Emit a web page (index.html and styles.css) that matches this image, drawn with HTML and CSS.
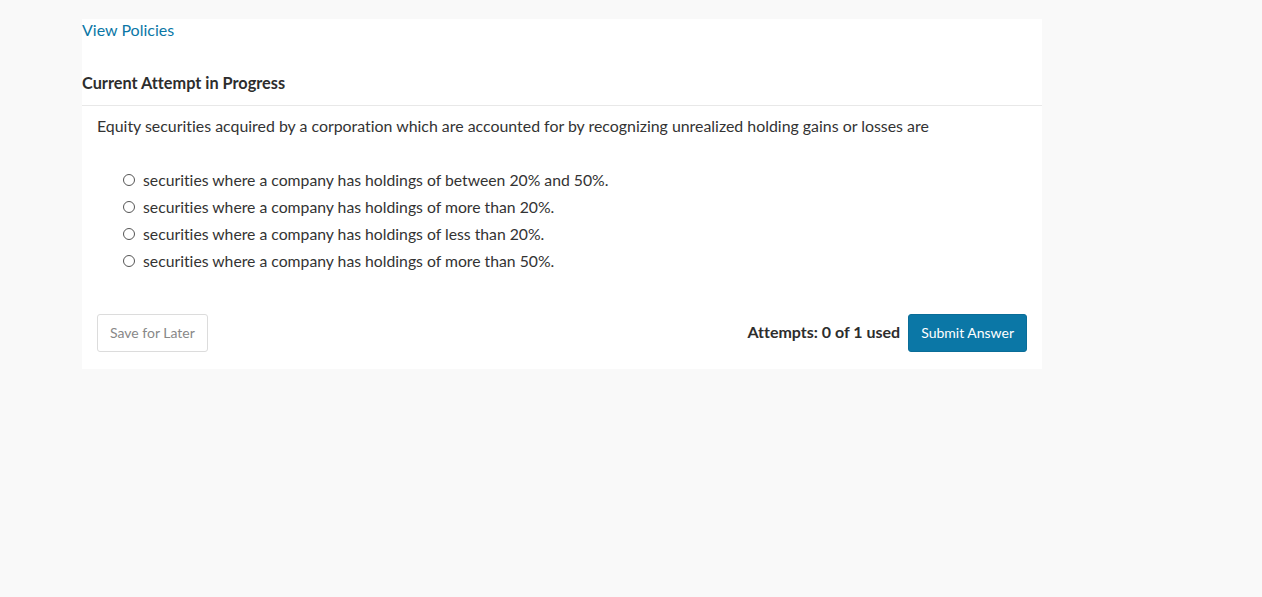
FILE: index.html
```html
<!DOCTYPE html>
<html lang="en">
<head>
    <meta charset="UTF-8">
    <meta name="viewport" content="width=device-width, initial-scale=1.0">
    <title>Current Attempt</title>
    <link rel="stylesheet" href="styles.css">
</head>
<body>
    <div class="panel">
        <a href="#" class="policies">View Policies</a>
        <h2 class="attempt-title">Current Attempt in Progress</h2>
        <div class="question">
            <p class="question-text">Equity securities acquired by a corporation which are accounted for by recognizing unrealized holding gains or losses are</p>
            <ul class="options">
                <li><label><input type="radio" name="answer"> securities where a company has holdings of between 20% and 50%.</label></li>
                <li><label><input type="radio" name="answer"> securities where a company has holdings of more than 20%.</label></li>
                <li><label><input type="radio" name="answer"> securities where a company has holdings of less than 20%.</label></li>
                <li><label><input type="radio" name="answer"> securities where a company has holdings of more than 50%.</label></li>
            </ul>
        </div>
        <div class="footer">
            <button type="button" class="btn-save">Save for Later</button>
            <div class="submit-group">
                <span class="attempts">Attempts: 0 of 1 used</span>
                <button type="button" class="btn-submit">Submit Answer</button>
            </div>
        </div>
    </div>
</body>
</html>
```

FILE: styles.css
```css
* {
    box-sizing: border-box;
}
body {
    margin: 0;
    background-color: #f9f9f9;
    font-family: Lato, 'Open Sans', sans-serif;
    font-size: 16px;
    font-variant-ligatures: no-common-ligatures;
    color: #333;
}
.panel {
    width: 960px;
    margin: 19px 0 0 82px;
    background-color: #ffffff;
    padding-bottom: 17px;
}
.policies {
    display: block;
    line-height: 22px;
    color: #0b77a6;
    text-decoration: none;
}
.attempt-title {
    margin: 31px 0 0;
    font-size: 16.3px;
    line-height: 22px;
    font-weight: bold;
    color: #2d2d2d;
    padding-bottom: 11px;
    border-bottom: 1px solid #e8e8e8;
}
.question {
    padding: 9px 15px 0;
}
.question-text {
    margin: 0;
    line-height: 22px;
    font-size: 15.9px;
}
.options {
    list-style: none;
    margin: 29px 0 0;
    padding: 0 0 0 26px;
    font-size: 15.75px;
}
.options li {
    line-height: 27px;
}
.options label {
    display: flex;
    align-items: center;
    gap: 8px;
}
.options input {
    appearance: none;
    width: 12px;
    height: 12px;
    margin: 0;
    border: 1px solid #555;
    border-radius: 50%;
    background: #fff;
}
.footer {
    display: flex;
    justify-content: space-between;
    align-items: center;
    padding: 40px 15px 0;
}
.submit-group {
    display: flex;
    align-items: center;
    gap: 8px;
}
.attempts {
    font-weight: bold;
    color: #2d2d2d;
    position: relative;
    top: -2px;
}
.btn-save,
.btn-submit {
    height: 38px;
    padding: 0 12px 2px;
    font-family: Lato, 'Open Sans', sans-serif;
    font-size: 14px;
    font-variant-ligatures: no-common-ligatures;
    border-radius: 3px;
    cursor: pointer;
}
.btn-save {
    background-color: #fff;
    border: 1px solid #dcdcdc;
    color: #888;
}
.btn-submit {
    background-color: #0b77a6;
    border: 1px solid #0a6d98;
    color: #fff;
}
```
